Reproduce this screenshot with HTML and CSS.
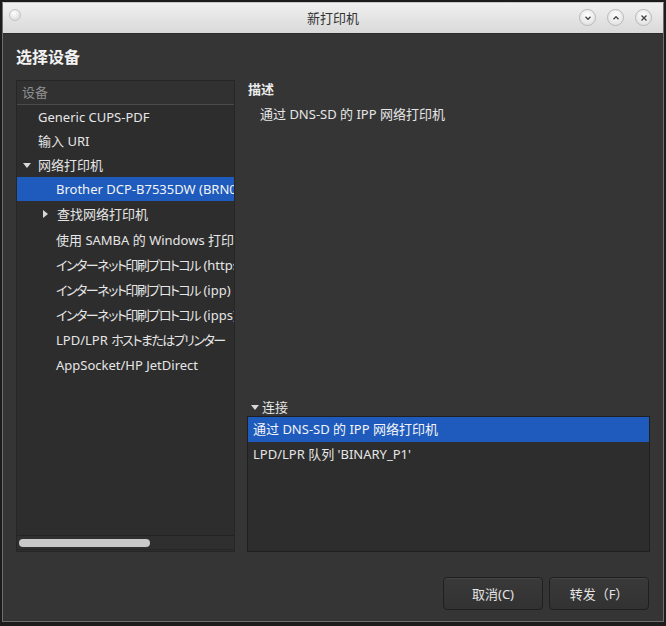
FILE: index.html
```html
<!DOCTYPE html>
<html lang="zh-CN">
<head>
    <meta charset="UTF-8">
    <title>新打印机</title>
    <link rel="stylesheet" href="styles.css">
</head>
<body>
    <div class="window">
        <div class="titlebar">
            <div class="tb-left"><span class="menu-dot"></span></div>
            <span class="title">新打印机</span>
            <div class="wm-buttons">
                <span class="wm-btn">
                    <svg width="8" height="8" viewBox="0 0 8 8"><path d="M1.5 2.8 L4 5.3 L6.5 2.8" fill="none" stroke="#444" stroke-width="1.3"/></svg>
                </span>
                <span class="wm-btn">
                    <svg width="8" height="8" viewBox="0 0 8 8"><path d="M1.5 5.2 L4 2.7 L6.5 5.2" fill="none" stroke="#444" stroke-width="1.3"/></svg>
                </span>
                <span class="wm-btn">
                    <svg width="8" height="8" viewBox="0 0 8 8"><path d="M1.5 1.5 L6.5 6.5 M6.5 1.5 L1.5 6.5" fill="none" stroke="#444" stroke-width="1.3"/></svg>
                </span>
            </div>
        </div>

        <div class="body">
            <h1 class="heading">选择设备</h1>

            <div class="panels">
                <div class="tree">
                    <div class="tree-header">设备</div>
                    <div class="tree-rows">
                        <div class="row lvl1">Generic CUPS-PDF</div>
                        <div class="row lvl1">输入 URI</div>
                        <div class="row lvl1"><span class="arrow down"></span>网络打印机</div>
                        <div class="row lvl2 selected">Brother DCP-B7535DW (BRN0080927AFB23)</div>
                        <div class="row lvl2 tall"><span class="arrow right"></span>查找网络打印机</div>
                        <div class="row lvl2 mid">使用 SAMBA 的 Windows 打印机</div>
                        <div class="row lvl2 mid" lang="ja"><span class="ja">インターネット印刷プロトコル</span>&nbsp;(https)</div>
                        <div class="row lvl2 mid" lang="ja"><span class="ja">インターネット印刷プロトコル</span>&nbsp;(ipp)</div>
                        <div class="row lvl2 mid" lang="ja"><span class="ja">インターネット印刷プロトコル</span>&nbsp;(ipps)</div>
                        <div class="row lvl2 mid" lang="ja">LPD/LPR&nbsp;<span class="ja">ホストまたはプリンター</span></div>
                        <div class="row lvl2 mid">AppSocket/HP JetDirect</div>
                    </div>
                    <div class="hscroll">
                        <div class="hthumb"></div>
                    </div>
                </div>

                <div class="detail">
                    <div class="label">描述</div>
                    <div class="desc">通过 DNS-SD 的 IPP 网络打印机</div>

                    <div class="expander"><span class="arrow down"></span>连接</div>
                    <div class="conn-list">
                        <div class="conn-row selected">通过 DNS-SD 的 IPP 网络打印机</div>
                        <div class="conn-row">LPD/LPR 队列 'BINARY_P1'</div>
                    </div>
                </div>
            </div>

            <div class="actions">
                <button class="btn">取消(C)</button>
                <button class="btn">转发（F）</button>
            </div>
        </div>
    </div>
</body>
</html>
```

FILE: styles.css
```css
* {
    box-sizing: border-box;
}

body {
    margin: 0;
    width: 666px;
    height: 626px;
    background: #1c1c1c;
    font-family: "Noto Sans", "Noto Sans CJK SC", sans-serif;
    font-size: 13px;
    color: #e6e6e6;
    overflow: hidden;
}

.window {
    margin: 2px 0 0 2px;
    width: 662px;
    height: 620px;
    border: 1px solid #6e6e6e;
    border-top-color: #c8c8c8;
    background: #353535;
    display: flex;
    flex-direction: column;
}

.titlebar {
    height: 31px;
    flex: none;
    display: grid;
    grid-template-columns: 1fr auto 1fr;
    align-items: center;
    background: linear-gradient(#f0f0f0, #d9d9d9);
    border-bottom: 1px solid #2a2a2a;
}

.tb-left {
    display: flex;
    align-items: center;
}

.menu-dot {
    width: 12px;
    height: 12px;
    margin-left: 6px;
    margin-bottom: 6px;
    border-radius: 50%;
    background: radial-gradient(circle at 40% 35%, #ffffff, #d2d2d2);
    border: 1px solid #c4c4c4;
}

.title {
    color: #333;
    font-size: 13px;
    margin-bottom: 1px;
}

.wm-buttons {
    display: flex;
    justify-content: flex-end;
    gap: 11px;
    margin-right: 11px;
    margin-bottom: 1px;
}

.wm-btn {
    width: 17px;
    height: 17px;
    border-radius: 50%;
    border: 1px solid #b8b8b8;
    background: radial-gradient(circle at 50% 35%, #ffffff, #dadada);
    display: flex;
    align-items: center;
    justify-content: center;
}

.body {
    flex: 1;
    padding: 13px 13px 11px 13px;
    display: flex;
    flex-direction: column;
}

.heading {
    margin: 0;
    font-size: 16px;
    font-weight: bold;
    line-height: 20px;
    color: #f2f2f2;
}

.panels {
    margin-top: 13px;
    display: flex;
    gap: 12px;
    height: 472px;
}

.tree {
    width: 219px;
    flex: none;
    background: #2d2d2d;
    border: 1px solid #262626;
    display: flex;
    flex-direction: column;
    overflow: hidden;
}

.tree-header {
    height: 24px;
    line-height: 23px;
    padding-left: 5px;
    color: #8e8e8e;
    background: #313131;
    border-bottom: 1px solid #4a4a4a;
    font-size: 13px;
}

.tree-rows {
    flex: 1;
    border-bottom: 1px solid #232323;
}

.row {
    height: 24px;
    line-height: 24px;
    white-space: nowrap;
    display: flex;
    align-items: center;
    overflow: hidden;
}

.row.tall {
    height: 26px;
}

.row.mid {
    height: 25px;
}

.ja {
    font-family: "Noto Sans CJK JP", sans-serif;
    font-feature-settings: "palt";
    letter-spacing: -1.5px;
}

.lvl1 {
    padding-left: 21px;
}

.lvl2 {
    padding-left: 39px;
}

.row .arrow {
    margin-left: -15px;
    margin-right: 7px;
}

.row.selected {
    background: #1e5bbd;
    color: #f4f4f4;
}

.arrow {
    display: inline-block;
    width: 0;
    height: 0;
    flex: none;
}

.arrow.down {
    border-left: 4px solid transparent;
    border-right: 4px solid transparent;
    border-top: 5px solid #d8d8d8;
}

.arrow.right {
    border-top: 4px solid transparent;
    border-bottom: 4px solid transparent;
    border-left: 5px solid #d8d8d8;
    margin-left: -13px !important;
    margin-right: 9px !important;
}

.hscroll {
    height: 14px;
    flex: none;
    padding: 3px 2px;
    border-bottom: 1px solid #262626;
    background: #2f2f2f;
    margin-bottom: 1px;
}

.hthumb {
    width: 131px;
    height: 8px;
    border-radius: 4px;
    background: #c9c9c9;
}

.detail {
    flex: 1;
    display: flex;
    flex-direction: column;
}

.label {
    line-height: 18px;
    font-weight: bold;
    color: #ececec;
    padding-left: 1px;
}

.desc {
    margin-top: 7px;
    padding-left: 13px;
    line-height: 18px;
}

.expander {
    margin-top: auto;
    display: flex;
    align-items: center;
    gap: 3px;
    padding-left: 4px;
    line-height: 18px;
    margin-bottom: 0;
}

.conn-list {
    height: 136px;
    background: #2d2d2d;
    border: 1px solid #1f1f1f;
}

.conn-row {
    height: 25px;
    line-height: 25px;
    padding-left: 5px;
}

.conn-row.selected {
    background: #1e5bbd;
    color: #f4f4f4;
}

.actions {
    margin-top: auto;
    display: flex;
    justify-content: flex-end;
    gap: 6px;
    margin-right: 1px;
}

.btn {
    width: 100px;
    height: 33px;
    border: 1px solid #1f1f1f;
    border-radius: 4px;
    background: linear-gradient(#393939, #323232);
    color: #e4e4e4;
    font-family: "Noto Sans", "Noto Sans CJK SC", sans-serif;
    font-size: 13px;
    box-shadow: inset 0 1px 0 #444;
}
```
